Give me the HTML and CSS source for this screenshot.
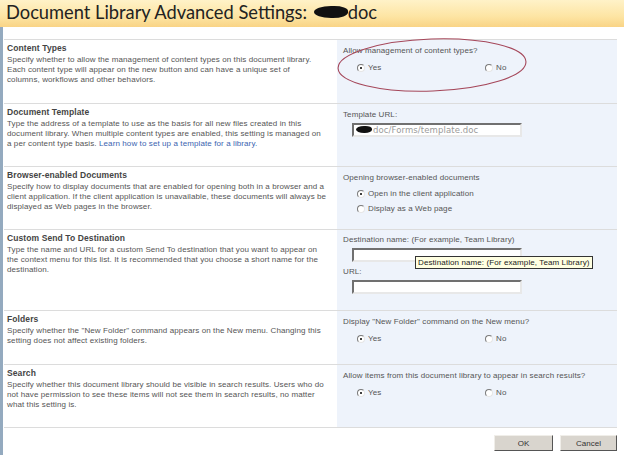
FILE: index.html
```html
<!DOCTYPE html>
<html lang="en">
<head>
    <meta charset="UTF-8">
    <title>Document Library Advanced Settings</title>
    <link rel="stylesheet" href="styles.css">
</head>
<body>
    <div class="title-bar">
        <h1 class="page-title">Document Library Advanced Settings: <span class="blot"></span>doc</h1>
    </div>
    <div class="settings">
        <div class="section roomy">
            <div class="section-info">
                <h3>Content Types</h3>
                <p>Specify whether to allow the management of content types on this document library.<br>Each content type will appear on the new button and can have a unique set of<br>columns, workflows and other behaviors.</p>
            </div>
            <div class="section-control">
                <div class="control-label">Allow management of content types?</div>
                <div class="radio-pair">
                    <span class="radio-opt"><i class="radio checked"></i>Yes</span>
                    <span class="radio-opt"><i class="radio"></i>No</span>
                </div>
                <svg class="mark-ellipse" viewBox="0 0 194 58" width="194" height="58">
                    <ellipse cx="97" cy="29" rx="94" ry="26" fill="none" stroke="#a5475a" stroke-width="1.1" transform="rotate(-2 97 29)"/>
                </svg>
            </div>
        </div>

        <div class="section">
            <div class="section-info">
                <h3>Document Template</h3>
                <p>Type the address of a template to use as the basis for all new files created in this<br>document library. When multiple content types are enabled, this setting is managed on<br>a per content type basis. <a href="#">Learn how to set up a template for a library.</a></p>
            </div>
            <div class="section-control">
                <div class="control-label">Template URL:</div>
                <div class="text-box filled"><span class="blot small"></span>doc/Forms/template.doc</div>
            </div>
        </div>

        <div class="section">
            <div class="section-info">
                <h3>Browser-enabled Documents</h3>
                <p>Specify how to display documents that are enabled for opening both in a browser and a<br>client application. If the client application is unavailable, these documents will always be<br>displayed as Web pages in the browser.</p>
            </div>
            <div class="section-control">
                <div class="control-label">Opening browser-enabled documents</div>
                <div class="radio-list">
                    <span class="radio-opt"><i class="radio checked"></i>Open in the client application</span>
                    <span class="radio-opt"><i class="radio"></i>Display as a Web page</span>
                </div>
            </div>
        </div>

        <div class="section">
            <div class="section-info">
                <h3>Custom Send To Destination</h3>
                <p>Type the name and URL for a custom Send To destination that you want to appear on<br>the context menu for this list. It is recommended that you choose a short name for the<br>destination.</p>
            </div>
            <div class="section-control send-to">
                <div class="control-label">Destination name: (For example, Team Library)</div>
                <div class="text-box"></div>
                <div class="control-label">URL:</div>
                <div class="text-box"></div>
                <div class="tooltip">Destination name: (For example, Team Library)</div>
            </div>
        </div>

        <div class="section roomy">
            <div class="section-info">
                <h3>Folders</h3>
                <p>Specify whether the "New Folder" command appears on the New menu. Changing this<br>setting does not affect existing folders.</p>
            </div>
            <div class="section-control">
                <div class="control-label">Display "New Folder" command on the New menu?</div>
                <div class="radio-pair">
                    <span class="radio-opt"><i class="radio checked"></i>Yes</span>
                    <span class="radio-opt"><i class="radio"></i>No</span>
                </div>
            </div>
        </div>

        <div class="section last">
            <div class="section-info">
                <h3>Search</h3>
                <p>Specify whether this document library should be visible in search results. Users who do<br>not have permission to see these items will not see them in search results, no matter<br>what this setting is.</p>
            </div>
            <div class="section-control">
                <div class="control-label">Allow items from this document library to appear in search results?</div>
                <div class="radio-pair">
                    <span class="radio-opt"><i class="radio checked"></i>Yes</span>
                    <span class="radio-opt"><i class="radio"></i>No</span>
                </div>
            </div>
        </div>

        <div class="buttons">
            <button class="btn btn-ok">OK</button>
            <button class="btn btn-cancel">Cancel</button>
        </div>
    </div>
</body>
</html>
```

FILE: styles.css
```css
body{
    margin: 0;
    background: #fff;
    font-family: "Liberation Sans", Arial, sans-serif;
    font-size: 8px;
    letter-spacing: 0.1px;
    color: #555;
}
.title-bar{
    height: 27px;
    background: linear-gradient(#fff2c8, #fde5a4 60%, #f9d486);
    overflow: hidden;
}
.page-title{
    margin: 0;
    padding: 0 0 0 6px;
    font-family: Lato, sans-serif;
    font-weight: normal;
    font-size: 18.3px;
    line-height: 25px;
    letter-spacing: 0;
    color: #222;
    white-space: nowrap;
}
.blot{
    display: inline-block;
    width: 34px;
    height: 12px;
    margin-left: 2px;
    background: #111;
    border-radius: 50% 40% 45% 50%;
    vertical-align: 1px;
}
.blot.small{
    width: 16px;
    height: 7px;
    margin: 0 1px 0 0;
    vertical-align: 0;
}
.settings{
    border-left: 3px solid #94aabf;
    padding-top: 12px;
    width: 614px;
}
.section{
    display: grid;
    grid-template-columns: 333px 280px;
    margin-left: 1px;
    border-top: 1px solid #dcdcdc;
}
.section.last{
    border-bottom: 1px solid #dcdcdc;
}
.section-info{
    padding: 2px 0 17px 3px;
}
.roomy .section-info{
    padding-bottom: 18px;
}
.section-info h3{
    margin: 0 0 1px;
    font-size: 8.5px;
    line-height: 12px;
    color: #444;
}
.section-info p{
    margin: 0;
    line-height: 10px;
    white-space: nowrap;
}
.section-info a{
    color: #3b64b0;
    text-decoration: none;
}
.section-control{
    position: relative;
    background: #eef3fb;
    padding: 6px 0 12px 6px;
}
.control-label{
    line-height: 10px;
    white-space: nowrap;
}
.radio-pair{
    display: flex;
    padding: 4px 0 0 14px;
}
.radio-pair .radio-opt{
    width: 128px;
}
.radio-list{
    display: flex;
    flex-direction: column;
    padding: 3px 0 0 14px;
}
.radio-opt{
    display: flex;
    align-items: center;
    height: 15px;
    white-space: nowrap;
}
.radio{
    width: 6px;
    height: 6px;
    margin-right: 3px;
    border-radius: 50%;
    border: 1px solid;
    border-color: #7a7a7a #e6e6e6 #e6e6e6 #7a7a7a;
    background: #fff;
    position: relative;
}
.radio.checked:after{
    content: '';
    position: absolute;
    left: 2px;
    top: 2px;
    width: 2px;
    height: 2px;
    background: #000;
    border-radius: 50%;
}
.text-box{
    width: 164px;
    height: 10px;
    margin: 3px 0 5px 9px;
    border: 2px solid;
    border-color: #707070 #e8e8e8 #e8e8e8 #707070;
    background: #fff;
    font-family: "DejaVu Sans", sans-serif;
    font-size: 8.5px;
    line-height: 10px;
    color: #9a9a9a;
    padding-left: 2px;
    white-space: nowrap;
    overflow: hidden;
}
.send-to{
    padding-top: 5px;
    padding-bottom: 11px;
}
.mark-ellipse{
    position: absolute;
    left: -2px;
    top: -4px;
}
.tooltip{
    position: absolute;
    left: 78px;
    top: 26px;
    padding: 0 2px;
    line-height: 11px;
    background: #ffffe1;
    border: 1px solid #333;
    color: #222;
    white-space: nowrap;
}
.buttons{
    display: flex;
    justify-content: flex-end;
    gap: 7px;
    padding: 7px 0 12px;
}
.btn{
    height: 16px;
    padding: 0;
    font-family: "Liberation Sans", Arial, sans-serif;
    font-size: 8px;
    color: #333;
    background: #d9d5ce;
    border: 1px solid;
    border-color: #f0eee9 #555 #555 #f0eee9;
}
.btn-ok{
    width: 59px;
}
.btn-cancel{
    width: 57px;
}
```
